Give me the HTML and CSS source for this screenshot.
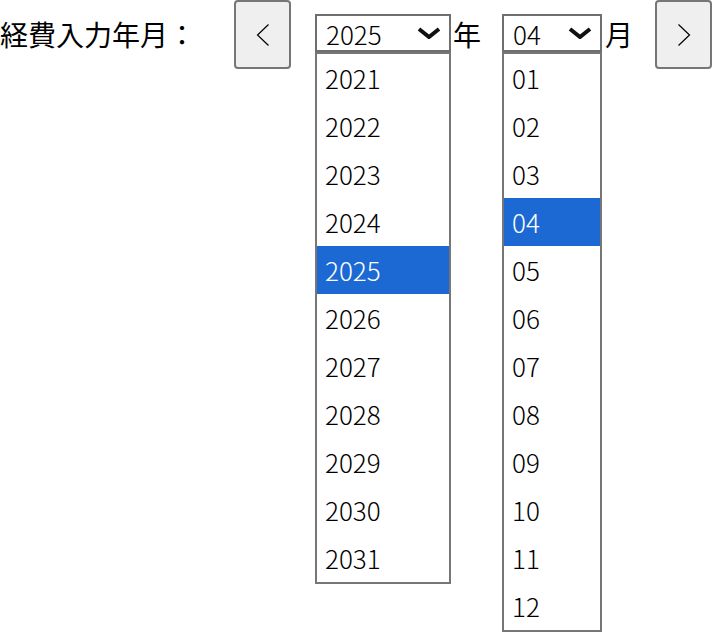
FILE: index.html
```html
<!DOCTYPE html>
<html lang="ja">
<head>
    <meta charset="UTF-8">
    <meta name="viewport" content="width=device-width, initial-scale=1.0">
    <title>経費入力</title>
    <link rel="stylesheet" href="styles.css">
</head>
<body>
    <div class="month-picker">
        <div class="label">経費入力年月：</div>
        <button class="nav-btn" type="button">
            <svg width="14" height="22" viewBox="0 0 14 22"><polyline points="12.5,0.5 1.5,11 12.5,21.5" fill="none" stroke="#000" stroke-width="1.2"/></svg>
        </button>

        <div class="select select-year">
            <div class="select-box">
                <span class="select-value">2025</span>
                <svg class="chevron" width="24" height="12" viewBox="0 0 24 12"><polyline points="2,2 12,10 22,2" fill="none" stroke="#111" stroke-width="4"/></svg>
            </div>
            <ul class="options">
                <li>2021</li>
                <li>2022</li>
                <li>2023</li>
                <li>2024</li>
                <li class="selected">2025</li>
                <li>2026</li>
                <li>2027</li>
                <li>2028</li>
                <li>2029</li>
                <li>2030</li>
                <li>2031</li>
            </ul>
        </div>
        <span class="unit unit-year">年</span>

        <div class="select select-month">
            <div class="select-box">
                <span class="select-value">04</span>
                <svg class="chevron" width="24" height="12" viewBox="0 0 24 12"><polyline points="2,2 12,10 22,2" fill="none" stroke="#111" stroke-width="4"/></svg>
            </div>
            <ul class="options">
                <li>01</li>
                <li>02</li>
                <li>03</li>
                <li class="selected">04</li>
                <li>05</li>
                <li>06</li>
                <li>07</li>
                <li>08</li>
                <li>09</li>
                <li>10</li>
                <li>11</li>
                <li>12</li>
            </ul>
        </div>
        <span class="unit unit-month">月</span>

        <button class="nav-btn nav-next" type="button">
            <svg width="14" height="22" viewBox="0 0 14 22"><polyline points="1.5,0.5 12.5,11 1.5,21.5" fill="none" stroke="#000" stroke-width="1.2"/></svg>
        </button>
    </div>
</body>
</html>
```

FILE: styles.css
```css
* {
    margin: 0;
    padding: 0;
    box-sizing: border-box;
}

body {
    background: #fff;
    color: #000;
    font-family: "Noto Sans CJK JP", "Liberation Sans", sans-serif;
}

.month-picker {
    display: flex;
    align-items: flex-start;
}

.label {
    width: 234px;
    font-size: 28px;
    line-height: 28px;
    margin-top: 20px;
    white-space: nowrap;
}

.nav-btn {
    width: 57px;
    height: 69px;
    background: #efefef;
    border: 2px solid #767676;
    border-radius: 4px;
    display: flex;
    align-items: center;
    justify-content: center;
}

.nav-next {
    margin-left: 22px;
}

/* 開いた状態のセレクト：ボックスの下にリストが並ぶ */
.select {
    display: flex;
    flex-direction: column;
    margin-top: 14px;
}

.select-year {
    width: 136px;
    margin-left: 24px;
}

.select-month {
    width: 100px;
    margin-left: 21px;
}

.select-box {
    height: 38px;
    border: 2px solid #6f6f6f;
    display: flex;
    align-items: center;
    justify-content: space-between;
    padding: 0 8px 0 9px;
    font-size: 26px;
    font-weight: 300;
}

.chevron {
    display: block;
}

.options {
    list-style: none;
    background: #fff;
    border: 2px solid #767676;
    font-size: 26px;
    font-weight: 300;
}

.options li {
    height: 48px;
    line-height: 48px;
    padding-left: 8px;
}

.options li.selected {
    background: #1c69d4;
    color: #fff;
}

.unit {
    width: 28px;
    font-size: 28px;
    line-height: 28px;
    margin-top: 20px;
}

.unit-year {
    margin-left: 2px;
}

.unit-month {
    margin-left: 3px;
}
```
